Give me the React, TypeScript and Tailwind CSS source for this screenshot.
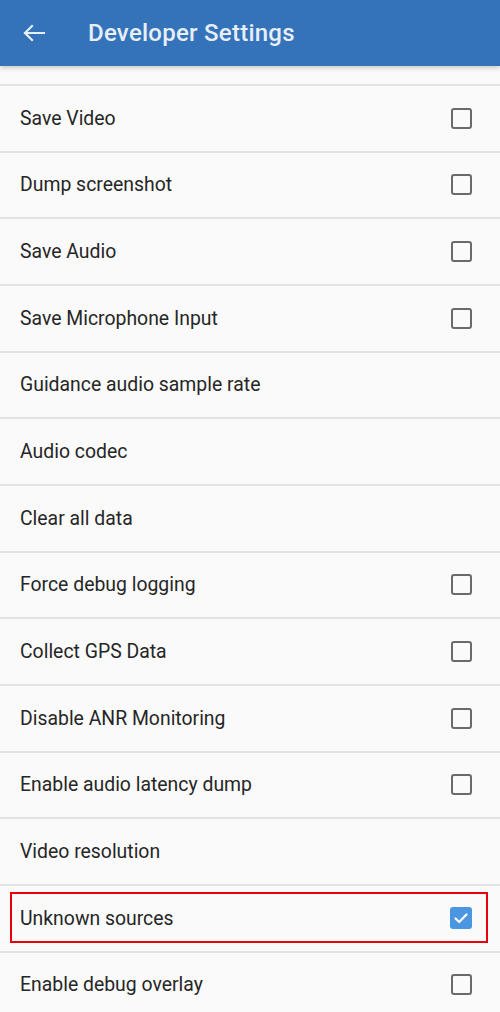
import React from "react";

const items: { label: string; check?: boolean; checked?: boolean; highlight?: boolean }[] = [
  { label: "Save Video", check: true },
  { label: "Dump screenshot", check: true },
  { label: "Save Audio", check: true },
  { label: "Save Microphone Input", check: true },
  { label: "Guidance audio sample rate" },
  { label: "Audio codec" },
  { label: "Clear all data" },
  { label: "Force debug logging", check: true },
  { label: "Collect GPS Data", check: true },
  { label: "Disable ANR Monitoring", check: true },
  { label: "Enable audio latency dump", check: true },
  { label: "Video resolution" },
  { label: "Unknown sources", check: true, checked: true, highlight: true },
  { label: "Enable debug overlay", check: true },
];

function Box({ checked }: { checked?: boolean }) {
  if (checked) {
    return (
      <div className="w-[22px] h-[22px] rounded-[3px] bg-[#4a96e0] flex items-center justify-center">
        <svg width="16" height="16" viewBox="0 0 16 16">
          <path d="M2.5 8.5 L6.2 12 L13.5 4.5" fill="none" stroke="#fff" strokeWidth="2.2" strokeLinecap="round" strokeLinejoin="round" />
        </svg>
      </div>
    );
  }
  return <div className="w-[21px] h-[21px] rounded-[3px] border-2 border-[#6a6a6a]" />;
}

export default function App() {
  return (
    <div className="w-[500px] h-[1012px] overflow-hidden bg-[#fafafa]" style={{ fontFamily: "Roboto, 'Noto Sans', sans-serif" }}>
      <div className="relative z-10 h-[66px] bg-[#3473b9] flex items-center shadow-[0_2px_5px_rgba(0,0,0,0.2)]">
        <svg className="ml-[22px]" width="24" height="20" viewBox="0 0 24 20">
          <path d="M22 10 H3 M10 3 L3 10 L10 17" fill="none" stroke="#e6eef8" strokeWidth="2.2" strokeLinecap="square" strokeLinejoin="miter" />
        </svg>
        <div className="ml-[42px] text-[24px] font-medium text-[#e6eef8] tracking-[0.25px]">Developer Settings</div>
      </div>
      <div className="h-[18px]" />
      {items.map((it) => (
        <div key={it.label} className="relative h-[66.67px] border-t-2 border-[#e3e3e3] flex items-center justify-between pl-[20px] pr-[28px]">
          <span className="text-[19.4px] text-[#262626]">{it.label}</span>
          {it.check && <Box checked={it.checked} />}
          {it.highlight && <div className="absolute left-[10px] right-[12px] top-[6px] h-[51px] border-2 border-[#e8000b]" />}
        </div>
      ))}
    </div>
  );
}
